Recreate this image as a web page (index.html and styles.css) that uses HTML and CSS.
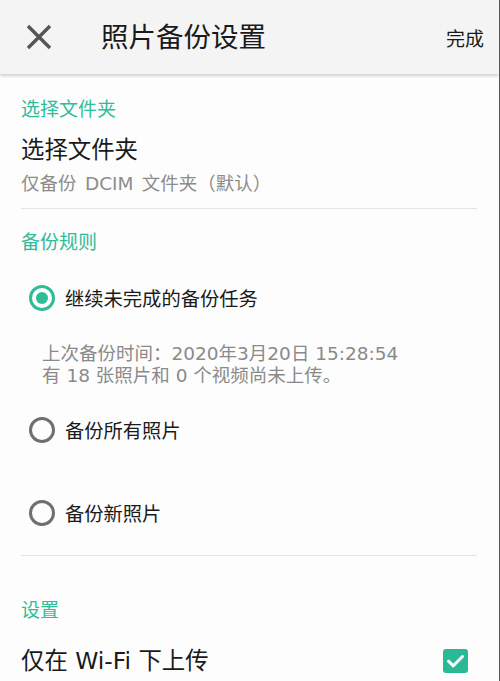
FILE: index.html
```html
<!DOCTYPE html>
<html lang="zh-CN">
<head>
<meta charset="utf-8">
<title>照片备份设置</title>
<link rel="stylesheet" href="styles.css">
</head>
<body>
<div class="screen">
  <header class="appbar">
    <button class="close" aria-label="关闭">
      <svg width="26" height="26" viewBox="0 0 26 26"><path d="M2 2 L24 24 M24 2 L2 24" stroke="#555" stroke-width="3.4" stroke-linecap="butt" fill="none"/></svg>
    </button>
    <h1 class="title">照片备份设置</h1>
    <span class="done">完成</span>
  </header>

  <main class="content">
    <div class="sec-label first">选择文件夹</div>
    <div class="item-title">选择文件夹</div>
    <div class="item-sub">仅备份 DCIM 文件夹（默认）</div>
    <div class="divider"></div>

    <div class="sec-label after-div">备份规则</div>
    <div class="radio-row r1">
      <span class="radio on"></span>
      <span class="radio-text">继续未完成的备份任务</span>
    </div>
    <div class="info">上次备份时间：2020年3月20日 15:28:54<br>有 18 张照片和 0 个视频尚未上传。</div>
    <div class="radio-row r2">
      <span class="radio"></span>
      <span class="radio-text">备份所有照片</span>
    </div>
    <div class="radio-row r3">
      <span class="radio"></span>
      <span class="radio-text">备份新照片</span>
    </div>
    <div class="divider d2"></div>

    <div class="sec-label settings">设置</div>
    <div class="check-row">
      <span class="item-title">仅在 Wi-Fi 下上传</span>
      <span class="checkbox">
        <svg width="25" height="24" viewBox="0 0 25 24"><path d="M5.5 12.2 L10.3 16.8 L19.5 7.5" stroke="#fff" stroke-width="3" fill="none" stroke-linecap="round" stroke-linejoin="round"/></svg>
      </span>
    </div>
  </main>
</div>
</body>
</html>
```

FILE: styles.css
```css
html, body {
  margin: 0;
  padding: 0;
  background: #fdfdfd;
}
body {
  font-family: "DejaVu Sans", "Noto Sans CJK SC", sans-serif;
  color: #1e1e1e;
  text-spacing-trim: space-all;
}
.screen {
  width: 500px;
  height: 681px;
  overflow: hidden;
  box-sizing: border-box;
  border-right: 1px solid #5a5a5a;
  background: #fdfdfd;
}
.appbar {
  height: 74px;
  background: #f4f4f4;
  display: flex;
  align-items: center;
  box-shadow: 0 2px 3px rgba(0,0,0,0.18);
  position: relative;
  z-index: 1;
}
.close {
  border: 0;
  background: none;
  padding: 0;
  margin-left: 26px;
  width: 26px;
  height: 26px;
  display: flex;
}
.title {
  margin: 0 0 0 49px;
  font-size: 27.5px;
  font-weight: 400;
  color: #1a1a1a;
  line-height: 34px;
  flex: 1;
}
.done {
  font-size: 19px;
  margin-right: 15px;
  color: #1a1a1a;
}
.content {
  padding: 0 21px 0 21px;
  display: flex;
  flex-direction: column;
}
.sec-label {
  font-size: 19px;
  line-height: 24px;
  color: #2fbc98;
}
.sec-label.first { margin-top: 23px; }
.sec-label.after-div { margin-top: 21px; }
.sec-label.settings { margin-top: 42px; }
.item-title {
  font-size: 23.4px;
  line-height: 30px;
  color: #1a1a1a;
}
.content > .item-title { margin-top: 14px; }
.item-sub {
  font-size: 18.5px;
  line-height: 24px;
  color: #8c8c8c;
  margin-top: 7px;
  word-spacing: 2.5px;
}
.divider {
  height: 1px;
  background: #e4e4e4;
  margin-top: 12px;
  margin-right: 1px;
}
.divider.d2 { margin-top: 20px; }
.radio-row {
  height: 44px;
  display: flex;
  align-items: center;
  padding-left: 8px;
  gap: 10px;
}
.radio-row.r1 { margin-top: 22px; }
.radio-row.r2 { margin-top: 21px; }
.radio-row.r3 { margin-top: 39px; }
.radio {
  width: 26px;
  height: 26px;
  box-sizing: border-box;
  border-radius: 50%;
  border: 3px solid #6f6f6f;
  display: flex;
  align-items: center;
  justify-content: center;
  flex: none;
}
.radio.on {
  border: 3.5px solid #2fbc98;
}
.radio.on::after {
  content: "";
  width: 12px;
  height: 12px;
  border-radius: 50%;
  background: #2fbc98;
}
.radio-text {
  font-size: 19.3px;
  color: #1a1a1a;
}
.info {
  margin-top: 23px;
  padding-left: 21px;
  font-size: 18.5px;
  line-height: 22px;
  color: #8a8a8a;
}
.check-row {
  margin-top: 24px;
  display: flex;
  align-items: center;
  justify-content: space-between;
}
.checkbox {
  width: 25px;
  height: 24px;
  border-radius: 3px;
  background: #2ab995;
  margin-right: 10px;
  display: flex;
}
```
